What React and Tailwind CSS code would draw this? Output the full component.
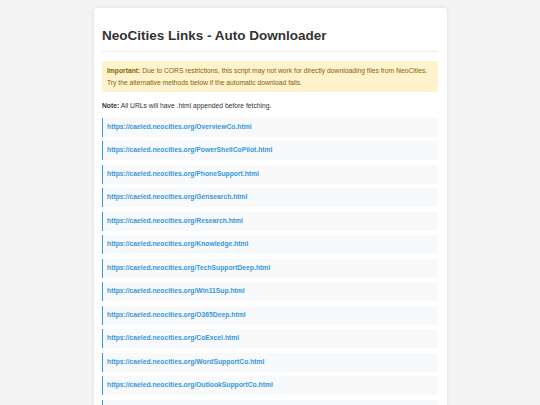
import React from "react";

const links = [
  "OverviewCo",
  "PowerShellCoPilot",
  "PhoneSupport",
  "Gensearch",
  "Research",
  "Knowledge",
  "TechSupportDeep",
  "Win11Sup",
  "O365Deep",
  "CoExcel",
  "WordSupportCo",
  "OutlookSupportCo",
  "TeamsSupportCo",
  "ExcelDeep",
];

export default function App() {
  return (
    <div
      className="min-h-[405px] bg-[#f4f4f4] px-[8.4px] pt-[8.4px] text-[6.75px] leading-[1.6] text-[#333]"
      style={{ fontFamily: '"Liberation Sans", Arial, sans-serif' }}
    >
      <div className="mx-auto w-[353px] rounded-[3.4px] bg-white p-[8.4px] shadow-[0_0_4px_rgba(0,0,0,0.1)]">
        <h1 className="mt-[11.5px] mb-0 border-b border-[#eee] pb-[7.5px] text-[13.5px] font-bold leading-[1.15] text-[#333]">
          NeoCities Links - Auto Downloader
        </h1>
        <div className="mt-[9px] rounded-[2px] bg-[#fff3cd] px-[5px] py-[3.5px] leading-[12px] text-[#856404]">
          <strong>Important:</strong> Due to CORS restrictions, this script may not work for
          directly downloading files from NeoCities. Try the alternative methods below if the
          automatic download fails.
        </div>
        <p className="mt-[7.5px] mb-[7px] leading-[11px]">
          <strong>Note:</strong> All URLs will have .html appended before fetching.
        </p>
        <div className="flex flex-col gap-[4.5px]">
          {links.map((l) => (
            <div
              key={l}
              className="border-l-[1.7px] border-[#3498db] bg-[#f8f9fa] px-[4.2px] py-[4.1px] leading-[10.8px]"
            >
              <span className="font-bold text-[#3498db]">
                https://caeled.neocities.org/{l}.html
              </span>
            </div>
          ))}
        </div>
      </div>
    </div>
  );
}
